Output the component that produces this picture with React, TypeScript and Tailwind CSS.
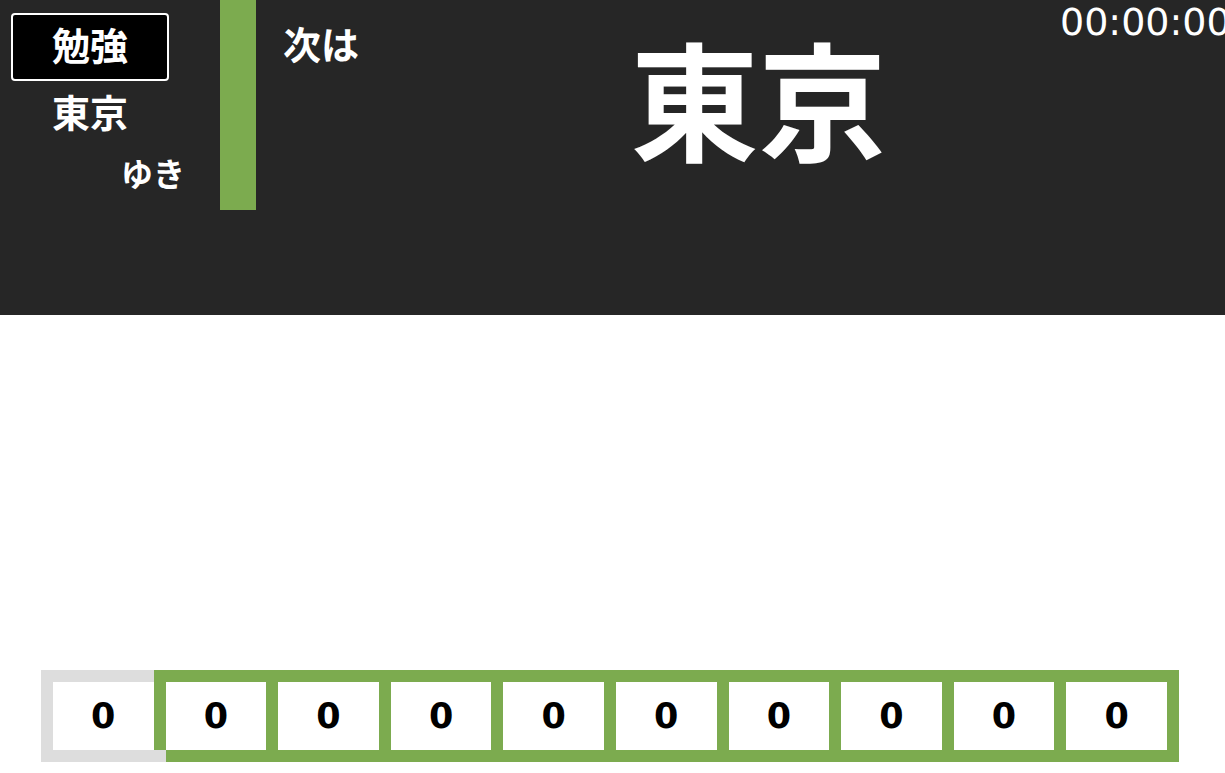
import React from 'react';

const font = { fontFamily: '"DejaVu Sans", "Noto Sans CJK JP", sans-serif' };

const Cell: React.FC<{ value: number; first?: boolean }> = ({ value, first }) => (
  <div
    className={
      'relative flex h-[92px] w-[124.6px] shrink-0 items-center justify-center border-[12px] bg-white ' +
      (first ? 'border-[#dddddd]' : '-ml-[12px] border-[#7cab4f]')
    }
  >
    <span className="text-[35px] font-bold leading-none text-black">{value}</span>
  </div>
);

const App: React.FC = () => {
  const digits = [0, 0, 0, 0, 0, 0, 0, 0, 0, 0];
  return (
    <div className="relative h-[773px] w-full overflow-hidden bg-white" style={font}>
      <header className="relative flex h-[315px] bg-[#262626] text-white">
        <div className="flex w-[220px] flex-col px-[11px] pt-[13px]">
          <div className="flex h-[68px] w-[158px] items-center justify-center rounded-[4px] border-2 border-white bg-black text-[38px] font-bold leading-none">
            勉強
          </div>
          <div className="mt-[14px] w-[158px] text-center text-[38px] font-bold leading-none">東京</div>
          <div className="mt-[26px] pr-[24px] text-right text-[32px] font-bold leading-none">ゆき</div>
        </div>
        <div className="h-[210px] w-[36px] bg-[#7cab4f]" />
        <div className="relative flex-1">
          <div className="absolute left-[27px] top-[27px] text-[38px] font-bold leading-none">次は</div>
          <div className="flex justify-center pl-[36px] pt-[44px] text-[128px] font-bold leading-none">東京</div>
        </div>
        <div className="absolute left-[1060px] top-[3px] text-[38px] font-normal leading-none whitespace-nowrap">
          00:00:00
        </div>
      </header>
      <div className="absolute left-[41px] top-[670px] flex">
        {digits.map((d, i) => (
          <Cell key={i} value={d} first={i === 0} />
        ))}
        {/* corner of the grey frame shows over the first green cell */}
        <div className="absolute bottom-0 left-[113px] h-[12px] w-[12px] bg-[#dddddd]" />
      </div>
    </div>
  );
};

export default App;
